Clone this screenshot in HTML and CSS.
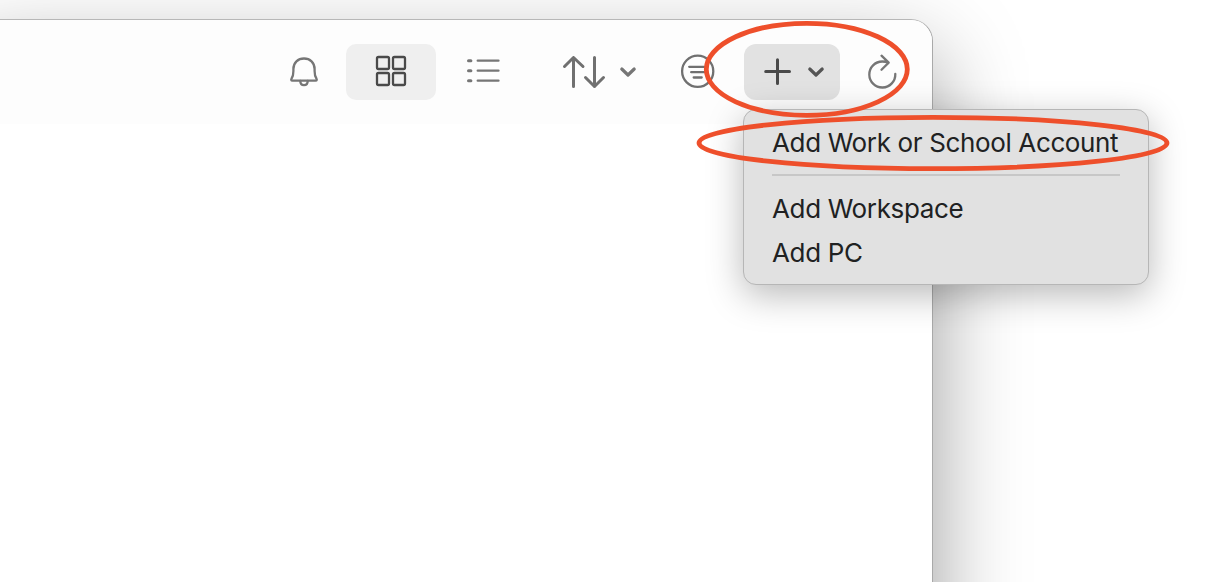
FILE: index.html
```html
<!DOCTYPE html>
<html lang="en">
<head>
<meta charset="utf-8">
<title>Workspaces</title>
<link rel="stylesheet" href="styles.css">
</head>
<body>
<main class="window">
  <header class="toolbar">
    <svg class="icon bell" width="30" height="34" viewBox="0 0 30 34">
      <path d="M3.500 25.700C2 25.700 2 24.500 2.600 23.500C4 21.500 4.400 19 4.400 16V14C4.400 7.500 9 3.500 15 3.500S25.600 7.500 25.600 14V16C25.600 19 26 21.500 27.400 23.500C28 24.500 28 25.700 26.500 25.700Z"/>
      <path d="M11.300 26C11.300 28.500 12.800 30.200 15 30.200S18.700 28.500 18.700 26"/>
    </svg>
    <button class="view selected" aria-label="Grid view">
      <svg class="icon dark" width="32" height="32" viewBox="0 0 32 32">
        <rect x="2" y="2" width="12" height="12" rx="1.500"/>
        <rect x="18" y="2" width="12" height="12" rx="1.500"/>
        <rect x="2" y="18" width="12" height="12" rx="1.500"/>
        <rect x="18" y="18" width="12" height="12" rx="1.500"/>
      </svg>
    </button>
    <button class="view" aria-label="List view">
      <svg class="icon" width="36" height="32" viewBox="0 0 36 32">
        <path d="M11.700 5.700H32.500M11.700 15.700H32.500M11.700 25.700H32.500"/>
        <path class="dots" d="M2.500 5.700H4.900M2.500 15.700H4.900M2.500 25.700H4.900"/>
      </svg>
    </button>
    <button class="sort" aria-label="Sort">
      <svg class="icon medium" width="44" height="36" viewBox="0 0 44 36">
        <path d="M11.500 32.500V3.500M2.500 12.500L11.500 3.500L21 12.500M32.500 3.500V32.500M23.500 23.500L32.500 32.500L41.500 23.500"/>
      </svg>
      <svg class="icon chevron" width="18" height="12" viewBox="0 0 18 12"><path d="M2.800 3L9 9L15.200 3"/></svg>
    </button>
    <svg class="icon filter" width="36" height="36" viewBox="0 0 36 36">
      <circle cx="17.700" cy="17.300" r="15.600"/>
      <path d="M9.200 12.800H26.200M11.200 18.200H24.200M13.700 23.500H21.700"/>
    </svg>
    <button class="add" aria-label="Add">
      <svg class="icon dark thick" width="30" height="30" viewBox="0 0 30 30"><path d="M15.500 2.800V26.500M3.700 14.600H27.500"/></svg>
      <svg class="icon dark chevron" width="18" height="12" viewBox="0 0 18 12"><path d="M2.800 3L9 9L15.200 3"/></svg>
    </button>
    <svg class="icon refresh" width="32" height="36" viewBox="0 0 32 36">
      <path d="M14.500 1.700L21.700 8.600L14.500 15.700M21.300 8.600C19.200 7.800 17.300 7.500 15.300 7.500A13 13 0 1 0 28.300 20"/>
    </svg>
  </header>
</main>
<nav class="menu">
  <a class="item">Add Work or School Account</a>
  <hr class="separator">
  <a class="item">Add Workspace</a>
  <a class="item">Add PC</a>
</nav>
<svg class="marks" width="1212" height="582" viewBox="0 0 1212 582">
  <ellipse cx="806.800" cy="69.300" rx="100.500" ry="46"/>
  <ellipse cx="933" cy="143" rx="234" ry="25.700"/>
</svg>
</body>
</html>
```

FILE: styles.css
```css
* { box-sizing: border-box; }

html {
  height: 582px;
  overflow: hidden;
}

body {
  position: relative;
  width: 1212px;
  height: 582px;
  margin: 0;
  padding-top: 19px;
  overflow: hidden;
  background: #fff;
  font-family: Inter, "Liberation Sans", sans-serif;
}

.window {
  width: 973px;
  height: 760px;
  margin-left: -40px;
  border: 1px solid #a9a9a9;
  border-top-color: #b7b7b7;
  border-radius: 22px;
  overflow: hidden;
  background: #fff;
  box-shadow: 0 36px 92px rgba(0, 0, 0, 0.4);
}

.toolbar {
  display: flex;
  align-items: center;
  height: 104px;
  padding-left: 328px;
  background: #fdfdfd;
}

.icon {
  display: block;
  flex: none;
  fill: none;
  stroke: #767676;
  stroke-width: 2.3;
  stroke-linecap: round;
  stroke-linejoin: round;
}

.dark { stroke: #4a4a4a; }
.medium { stroke: #707070; stroke-width: 3; }
.thick { stroke-width: 3; }
.chevron { stroke-width: 3.2; }
.add .chevron { stroke: #555; }
.dots { stroke-width: 3; }

button {
  display: flex;
  align-items: center;
  flex: none;
  height: 56px;
  padding: 0;
  border: 0;
  border-radius: 10px;
  background: none;
}

.view {
  justify-content: center;
  width: 90px;
  padding-bottom: 2px;
}

.bell { margin-right: 27px; }
.selected { margin-right: 3px; background: #efefef; }
.sort { gap: 13px; margin-left: 33px; }
.filter { margin-left: 43px; margin-right: 28px; stroke: #707070; }
.add {
  gap: 15px;
  width: 96px;
  padding-left: 18px;
  border-radius: 12px;
  background: #e2e2e2;
}
.refresh { margin-left: 27px; }

.menu {
  position: absolute;
  top: 109px;
  left: 743px;
  width: 406px;
  height: 176px;
  padding: 11px 28px;
  border: 1px solid #b6b6b6;
  border-radius: 13px;
  background: #e1e1e1;
  box-shadow: 0 10px 36px rgba(0, 0, 0, 0.28);
}

.item {
  display: block;
  height: 44px;
  color: #202122;
  font-size: 26px;
  line-height: 44px;
  letter-spacing: -0.36px;
  white-space: nowrap;
}

.separator {
  height: 2px;
  margin: 9px 0 11px;
  border: 0;
  background: #c7c7c7;
}

.marks {
  position: absolute;
  top: 0;
  left: 0;
  fill: none;
  stroke: #ee4f2b;
  stroke-width: 4.8;
}
```
